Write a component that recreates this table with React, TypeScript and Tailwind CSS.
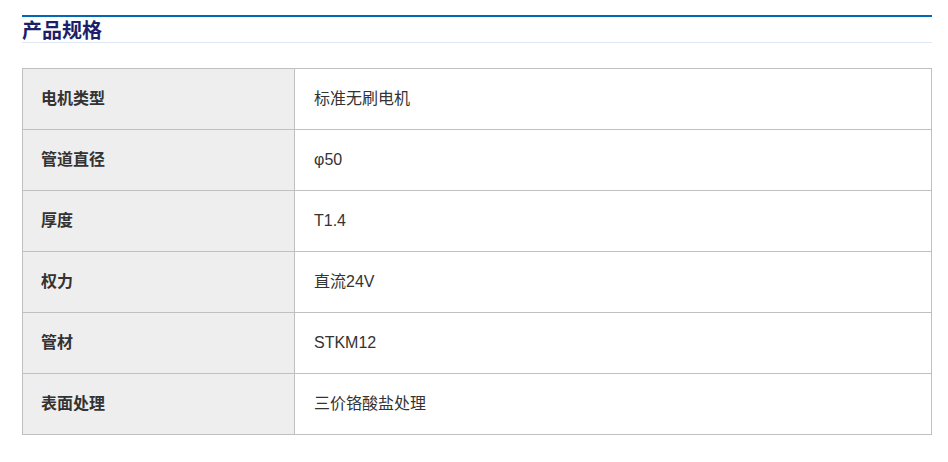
const rows: [string, string][] = [
  ["电机类型", "标准无刷电机"],
  ["管道直径", "φ50"],
  ["厚度", "T1.4"],
  ["权力", "直流24V"],
  ["管材", "STKM12"],
  ["表面处理", "三价铬酸盐处理"],
];

export default function App() {
  return (
    <div
      className="w-[948px] h-[462px] bg-white pt-[15px] pl-[22px]"
      style={{ fontFamily: '"Liberation Sans", "Noto Sans CJK SC", sans-serif' }}
    >
      <div className="w-[910px]">
        {/* Title */}
        <div className="border-t-2 border-[#0068b7] border-b border-b-[#dde8f4] h-[28px]">
          <h2 className="pt-[2px] text-[20px] leading-[24px] font-bold text-[#1d1f6b]">产品规格</h2>
        </div>

        {/* Spec table */}
        <table className="mt-[25px] w-[910px] border-collapse text-[16px] text-[#333]">
          <tbody>
            {rows.map(([k, v]) => (
              <tr key={k} className="h-[61px]">
                <td className="w-[272px] bg-[#eeeeee] border border-[#c0c0c0] pl-[18px] font-bold">
                  {k}
                </td>
                <td className="border border-[#c0c0c0] pl-[19px]">{v}</td>
              </tr>
            ))}
          </tbody>
        </table>
      </div>
    </div>
  );
}
